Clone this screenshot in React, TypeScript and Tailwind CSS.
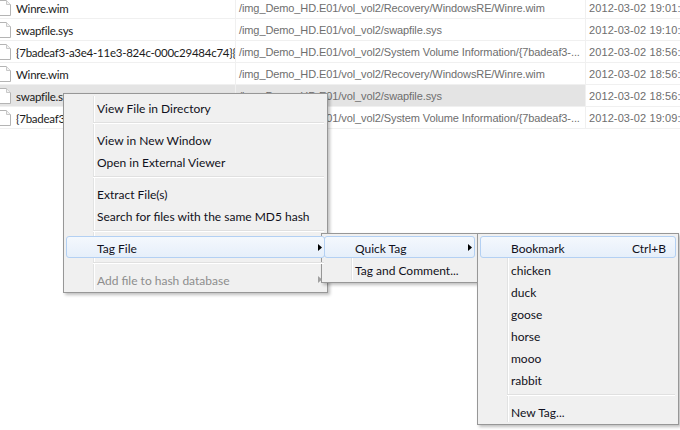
import type { ReactNode } from "react";

type Row = { name: string; path: string; date: string; selected?: boolean };

const rows: Row[] = [
  {
    name: "Winre.wim",
    path: "/img_Demo_HD.E01/vol_vol2/Recovery/WindowsRE/Winre.wim",
    date: "2012-03-02 19:01:47",
  },
  {
    name: "swapfile.sys",
    path: "/img_Demo_HD.E01/vol_vol2/swapfile.sys",
    date: "2012-03-02 19:10:12",
  },
  {
    name: "{7badeaf3-a3e4-11e3-824c-000c29484c74}{3808876b-c176-4e48-b7ae-04046e6cc752}",
    path: "/img_Demo_HD.E01/vol_vol2/System Volume Information/{7badeaf3-...",
    date: "2012-03-02 18:56:30",
  },
  {
    name: "Winre.wim",
    path: "/img_Demo_HD.E01/vol_vol2/Recovery/WindowsRE/Winre.wim",
    date: "2012-03-02 18:56:31",
  },
  {
    name: "swapfile.sys",
    path: "/img_Demo_HD.E01/vol_vol2/swapfile.sys",
    date: "2012-03-02 18:56:35",
    selected: true,
  },
  {
    name: "{7badeaf3-a3e4-11e3-824c-000c29484c74}{3808876b-c176-4e48-b7ae-04046e6cc752}",
    path: "/img_Demo_HD.E01/vol_vol2/System Volume Information/{7badeaf3-...",
    date: "2012-03-02 19:09:02",
  },
];

function FileIcon() {
  return (
    <svg width="16" height="16" viewBox="0 0 16 16" className="-ml-[4px] mr-[4px] shrink-0">
      <path d="M1.5 0.5 H10.5 L14.5 4.5 V15.5 H1.5 Z" fill="#ffffff" stroke="#b4b4b4" />
      <path d="M10.5 0.5 V4.5 H14.5" fill="#f2f2f2" stroke="#c8c8c8" />
    </svg>
  );
}

function Arrow({ disabled }: { disabled?: boolean }) {
  return (
    <svg width="4" height="7" viewBox="0 0 4 7" className="shrink-0">
      <path d="M0 0 L4 3.5 L0 7 Z" fill={disabled ? "#a0a0a0" : "#000000"} />
    </svg>
  );
}

function Item({
  label,
  hot,
  disabled,
  sub,
  shortcut,
}: {
  label: string;
  hot?: boolean;
  disabled?: boolean;
  sub?: boolean;
  shortcut?: string;
}) {
  return (
    <div
      className={
        "relative z-10 flex h-[22px] items-center rounded-[3px] border pl-[30px] pr-[2px] " +
        (hot
          ? "border-[#b3d0f3] bg-gradient-to-b from-[#f4f8fd] to-[#e6effa]"
          : "border-transparent")
      }
    >
      <span
        className={
          "flex-1 whitespace-nowrap pt-[3px] leading-[15px] " +
          (disabled ? "text-[#8d8d8d]" : "text-[#101020]")
        }
      >
        {label}
      </span>
      {shortcut && (
        <span className="pr-[7px] pt-[3px] leading-[15px] text-[#101020]">{shortcut}</span>
      )}
      {sub && <Arrow disabled={disabled} />}
    </div>
  );
}

function Sep() {
  return (
    <div className="relative z-10 my-[4px] ml-[27px] mr-[1px] border-t border-b border-t-[#e0e0e0] border-b-white" />
  );
}

function Menu({ className, children }: { className: string; children: ReactNode }) {
  return (
    <div
      className={
        "absolute border border-[#979797] bg-[#f0f0f0] p-[2px] shadow-[2px_2px_3px_rgba(0,0,0,0.25)] " +
        className
      }
    >
      <div className="pointer-events-none absolute top-[2px] bottom-[2px] left-[29px] w-[2px] border-l border-r border-l-[#e2e3e3] border-r-white" />
      {children}
    </div>
  );
}

export default function App() {
  return (
    <div
      className="relative h-[430px] w-[680px] overflow-hidden bg-white text-[12px]"
      style={{ fontFamily: "Lato, 'Liberation Sans', sans-serif" }}
    >
      <div className="-mt-[3px] flex flex-col">
        {rows.map((r, i) => (
          <div key={i} className="flex h-[22px] border-b border-[#f0f0f0]">
            <div
              className={
                "flex w-[236px] shrink-0 items-center overflow-hidden border-r border-[#f0f0f0] pr-[2px] text-[11.5px] tracking-[-0.25px] text-[#1b1b1b] " +
                (r.selected ? "bg-[#e4e4e4]" : "")
              }
            >
              <FileIcon />
              <span className="whitespace-nowrap pt-[2px]">{r.name}</span>
            </div>
            <div
              className={
                "flex w-[350px] shrink-0 items-center overflow-hidden whitespace-nowrap border-r border-[#f0f0f0] pl-[3px] pt-[2px] text-[11px] tracking-[-0.1px] text-[#6e6e6e] " +
                (r.selected ? "bg-[#e4e4e4]" : "")
              }
              style={{ fontFamily: "'Liberation Sans', sans-serif" }}
            >
              {r.path}
            </div>
            <div
              className="flex flex-1 items-center overflow-hidden whitespace-nowrap pl-[3px] pt-[2px] text-[11px] tracking-[0.1px] text-[#6e6e6e]"
              style={{ fontFamily: "'Liberation Sans', sans-serif" }}
            >
              {r.date}
            </div>
          </div>
        ))}
      </div>

      <Menu className="left-[63px] top-[93px] w-[265px]">
        <Item label="View File in Directory" />
        <Sep />
        <Item label="View in New Window" />
        <Item label="Open in External Viewer" />
        <Sep />
        <Item label="Extract File(s)" />
        <Item label="Search for files with the same MD5 hash" />
        <Sep />
        <Item label="Tag File" hot sub />
        <Sep />
        <Item label="Add file to hash database" disabled sub />
      </Menu>

      <Menu className="left-[321px] top-[233px] w-[157px]">
        <Item label="Quick Tag" hot sub />
        <Item label="Tag and Comment..." />
      </Menu>

      <Menu className="left-[477px] top-[233px] w-[202px]">
        <Item label="Bookmark" hot shortcut="Ctrl+B" />
        <Item label="chicken" />
        <Item label="duck" />
        <Item label="goose" />
        <Item label="horse" />
        <Item label="mooo" />
        <Item label="rabbit" />
        <Sep />
        <Item label="New Tag..." />
      </Menu>
    </div>
  );
}
